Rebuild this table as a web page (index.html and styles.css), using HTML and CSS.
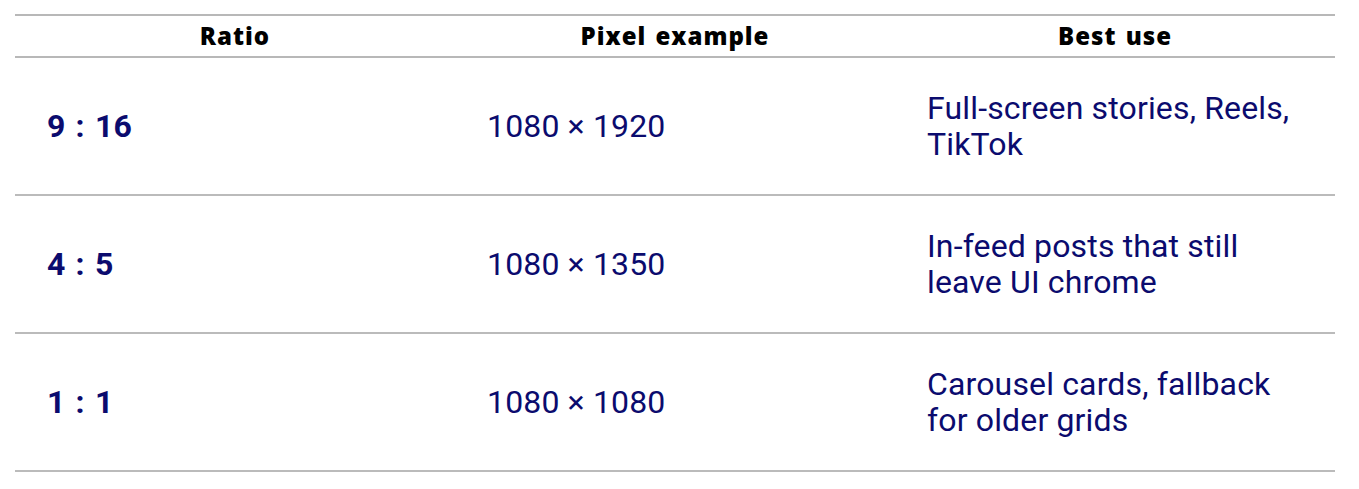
FILE: index.html
```html
<!DOCTYPE html>
<html lang="en">
<head>
<meta charset="utf-8">
<title>Aspect ratios</title>
<link rel="stylesheet" href="styles.css">
</head>
<body>
<table class="ratios">
  <thead>
    <tr>
      <th>Ratio</th>
      <th>Pixel example</th>
      <th>Best use</th>
    </tr>
  </thead>
  <tbody>
    <tr>
      <td class="ratio">9 : 16</td>
      <td>1080 × 1920</td>
      <td>Full-screen stories, Reels, TikTok</td>
    </tr>
    <tr>
      <td class="ratio">4 : 5</td>
      <td>1080 × 1350</td>
      <td>In-feed posts that still leave UI chrome</td>
    </tr>
    <tr>
      <td class="ratio">1 : 1</td>
      <td>1080 × 1080</td>
      <td>Carousel cards, fallback for older grids</td>
    </tr>
  </tbody>
</table>
</body>
</html>
```
FILE: styles.css
```css
html, body {
  margin: 0;
  padding: 0;
  background: #ffffff;
}
body {
  padding: 14px 24px 0 15px;
}
.ratios {
  width: 1320px;
  border-collapse: collapse;
  table-layout: fixed;
  font-family: Roboto, "Liberation Sans", sans-serif;
}
.ratios th {
  font-family: "Open Sans", "Liberation Sans", sans-serif;
  font-weight: 800;
  font-size: 24px;
  line-height: 30px;
  letter-spacing: 1px;
  word-spacing: 2px;
  color: #000;
  text-align: center;
  padding: 5px 32px 5px;
  border-top: 2px solid #b8b8b8;
  border-bottom: 2px solid #b8b8b8;
}
.ratios td {
  font-size: 32px;
  line-height: 36px;
  letter-spacing: 0.15px;
  color: #0b0b6e;
  text-align: left;
  vertical-align: middle;
  padding: 32px 32px;
  border-bottom: 2px solid #bbbbbb;
}
.ratios td.ratio {
  font-weight: 700;
  word-spacing: 2px;
}
```
